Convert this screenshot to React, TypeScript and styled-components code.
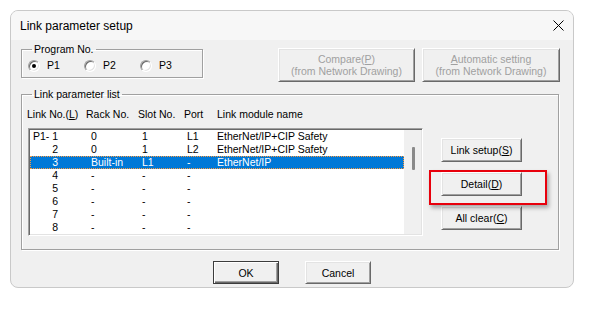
import React from 'react';
import styled, { createGlobalStyle } from 'styled-components';

const GlobalStyle = createGlobalStyle`
  html, body {
    margin: 0;
    padding: 0;
    background: #fff;
  }
  body {
    font-family: "Liberation Sans", Arial, sans-serif;
    font-size: 10.5px;
    color: #000;
  }
`;

const Page = styled.div`
  padding: 10px 0 0 10px;
`;

const Window = styled.div`
  width: 564px;
  height: 278px;
  box-sizing: border-box;
  border: 1px solid #c9c9c9;
  border-radius: 8px;
  background: #f0f0f0;
  overflow: hidden;
  display: flex;
  flex-direction: column;
`;

const TitleBar = styled.div`
  height: 29px;
  flex: none;
  display: flex;
  align-items: center;
  justify-content: space-between;
  padding: 0 9px 0 9px;
  background: #f7f7f7;
  font-size: 12px;
`;

const CloseIcon = styled.svg`
  width: 11px;
  height: 11px;
`;

const Body = styled.div`
  padding: 3px 0 0 10px;
  display: flex;
  flex-direction: column;
`;

const TopRow = styled.div`
  display: flex;
  align-items: flex-start;
`;

const Group = styled.fieldset<{ $width: number }>`
  width: ${({ $width }) => $width}px;
  box-sizing: border-box;
  margin: 0;
  border: 1px solid #a0a0a0;
  box-shadow: inset 1px 1px #fff, 1px 1px #fff;
  min-inline-size: 0;
`;

const ProgramGroup = styled(Group)`
  padding: 3px 6px 5px 6px;
`;

const LinkGroup = styled(Group)`
  margin-top: 6px;
  height: 162px;
  padding: 7px 0 0 6px;
`;

const Legend = styled.legend`
  padding: 0 2px;
  margin-left: 4px;
  line-height: 13px;
`;

const RadioRow = styled.div`
  display: flex;
`;

const RadioItem = styled.label`
  width: 61px;
  display: flex;
  align-items: center;
  gap: 7px;
  line-height: 13px;
`;

const RadioCircle = styled.span<{ $checked?: boolean }>`
  position: relative;
  width: 12px;
  height: 12px;
  box-sizing: border-box;
  border-radius: 50%;
  border: 1px solid;
  border-color: #a0a0a0 #fff #fff #a0a0a0;
  background: #fff;
  box-shadow: inset 1px 1px #696969, inset -1px -1px #e3e3e3;

  &::after {
    content: '';
    display: ${({ $checked }) => ($checked ? 'block' : 'none')};
    position: absolute;
    left: 3px;
    top: 3px;
    width: 4px;
    height: 4px;
    border-radius: 50%;
    background: #000;
  }
`;

const Button = styled.button<{ $default?: boolean; $width: number; $height: number }>`
  width: ${({ $width }) => $width}px;
  height: ${({ $height }) => $height}px;
  box-sizing: border-box;
  padding: 0;
  font: inherit;
  font-size: 10.5px;
  line-height: 12px;
  color: #000;
  background: #f0f0f0;
  border: 1px solid;
  border-color: ${({ $default }) => ($default ? '#3c3c3c' : '#fff #696969 #696969 #fff')};
  box-shadow: ${({ $default }) =>
    $default
      ? 'inset 1px 1px #fff, inset -1px -1px #696969, inset -2px -2px #a0a0a0'
      : 'inset 1px 1px #e3e3e3, inset -1px -1px #a0a0a0'};

  &:disabled {
    color: #a0a0a0;
  }
`;

const DrawingButtons = styled.div`
  display: flex;
  gap: 7px;
  margin: 5px 0 0 75px;
`;

const GroupContent = styled.div`
  display: flex;
  align-items: flex-start;
`;

const ListArea = styled.div`
  display: flex;
  flex-direction: column;
  gap: 7px;
`;

const HeaderRow = styled.div`
  display: flex;
  margin-left: -1px;
  line-height: 13px;
`;

const HeaderCell = styled.div<{ $w?: number }>`
  width: ${({ $w }) => ($w ? `${$w}px` : 'auto')};
  flex: none;
  white-space: nowrap;
`;

const ListBox = styled.div`
  width: 395px;
  height: 108px;
  box-sizing: border-box;
  padding: 1px;
  border: 1px solid;
  border-color: #a0a0a0 #fff #fff #a0a0a0;
  box-shadow: inset 1px 1px #696969, inset -1px -1px #e3e3e3;
  background: #fff;
  display: flex;
`;

const Rows = styled.div`
  flex: 1;
`;

const Row = styled.div<{ $selected?: boolean }>`
  display: grid;
  grid-template-columns: 61px 51px 45px 30px 1fr;
  height: 13px;
  line-height: 13px;
  white-space: nowrap;
  color: ${({ $selected }) => ($selected ? '#fff' : '#000')};
  background: ${({ $selected }) => ($selected ? '#0078d7' : 'transparent')};
  outline: ${({ $selected }) => ($selected ? '1px dotted #ff9a3c' : 'none')};
  outline-offset: -1px;
`;

const LinkNoCell = styled.div`
  width: 25px;
  margin-left: 3px;
  display: flex;
  justify-content: space-between;
`;

const ScrollTrack = styled.div`
  width: 17px;
  background: #f0f0f0;
  position: relative;
`;

const ScrollThumb = styled.div`
  width: 3px;
  height: 23px;
  margin: 17px 0 0 8px;
  border-radius: 1px;
  background: #8a8a8a;
`;

const SideButtons = styled.div`
  position: relative;
  display: flex;
  flex-direction: column;
  gap: 10px;
  margin: 30px 0 0 18px;
`;

const Highlight = styled.div`
  position: absolute;
  left: -12px;
  top: 32px;
  width: 118px;
  height: 35px;
  box-sizing: border-box;
  border: 2px solid #e8000c;
  box-shadow: 2px 3px 4px rgba(0, 0, 0, 0.3);
  pointer-events: none;
`;

const Footer = styled.div`
  display: flex;
  justify-content: center;
  gap: 26px;
  margin: 11px 0 0 -10px;
`;

const Key = styled.u`
  text-decoration-thickness: 1px;
  text-underline-offset: 1px;
`;

interface LinkRow {
  no: number;
  rack: string;
  slot: string;
  port: string;
  name: string;
}

const rows: LinkRow[] = [
  { no: 1, rack: '0', slot: '1', port: 'L1', name: 'EtherNet/IP+CIP Safety' },
  { no: 2, rack: '0', slot: '1', port: 'L2', name: 'EtherNet/IP+CIP Safety' },
  { no: 3, rack: 'Built-in', slot: 'L1', port: '-', name: 'EtherNet/IP' },
  { no: 4, rack: '-', slot: '-', port: '-', name: '' },
  { no: 5, rack: '-', slot: '-', port: '-', name: '' },
  { no: 6, rack: '-', slot: '-', port: '-', name: '' },
  { no: 7, rack: '-', slot: '-', port: '-', name: '' },
  { no: 8, rack: '-', slot: '-', port: '-', name: '' },
];

export default function App(): JSX.Element {
  return (
    <Page>
      <GlobalStyle />
      <Window>
        <TitleBar>
          <span>Link parameter setup</span>
          <CloseIcon viewBox="0 0 11 11">
            <path d="M0.5 0.5 L10.5 10.5 M10.5 0.5 L0.5 10.5" stroke="#000" strokeWidth="1" />
          </CloseIcon>
        </TitleBar>
        <Body>
          <TopRow>
            <ProgramGroup $width={182}>
              <Legend>Program No.</Legend>
              <RadioRow>
                <RadioItem>
                  <RadioCircle $checked />
                  P1
                </RadioItem>
                <RadioItem>
                  <RadioCircle />
                  P2
                </RadioItem>
                <RadioItem>
                  <RadioCircle />
                  P3
                </RadioItem>
              </RadioRow>
            </ProgramGroup>
            <DrawingButtons>
              <Button disabled $width={137} $height={34}>
                Compare(<Key>P</Key>)
                <br />
                (from Network Drawing)
              </Button>
              <Button disabled $width={138} $height={34}>
                <Key>A</Key>utomatic setting
                <br />
                (from Network Drawing)
              </Button>
            </DrawingButtons>
          </TopRow>

          <LinkGroup $width={538}>
            <Legend>Link parameter list</Legend>
            <GroupContent>
              <ListArea>
                <HeaderRow>
                  <HeaderCell $w={59}>
                    Link No.(<Key>L</Key>)
                  </HeaderCell>
                  <HeaderCell $w={52}>Rack No.</HeaderCell>
                  <HeaderCell $w={46}>Slot No.</HeaderCell>
                  <HeaderCell $w={33}>Port</HeaderCell>
                  <HeaderCell>Link module name</HeaderCell>
                </HeaderRow>
                <ListBox>
                  <Rows>
                    {rows.map((r) => (
                      <Row key={r.no} $selected={r.no === 3}>
                        <LinkNoCell>
                          <span>{r.no === 1 ? 'P1-' : ''}</span>
                          <span>{r.no}</span>
                        </LinkNoCell>
                        <span>{r.rack}</span>
                        <span>{r.slot}</span>
                        <span>{r.port}</span>
                        <span>{r.name}</span>
                      </Row>
                    ))}
                  </Rows>
                  <ScrollTrack>
                    <ScrollThumb />
                  </ScrollTrack>
                </ListBox>
              </ListArea>
              <SideButtons>
                <Button $width={81} $height={24}>
                  Link setup(<Key>S</Key>)
                </Button>
                <Button $width={81} $height={24}>
                  Detail(<Key>D</Key>)
                </Button>
                <Button $width={81} $height={24}>
                  All clear(<Key>C</Key>)
                </Button>
                <Highlight />
              </SideButtons>
            </GroupContent>
          </LinkGroup>

          <Footer>
            <Button $default $width={66} $height={23}>
              OK
            </Button>
            <Button $width={66} $height={23}>
              Cancel
            </Button>
          </Footer>
        </Body>
      </Window>
    </Page>
  );
}
